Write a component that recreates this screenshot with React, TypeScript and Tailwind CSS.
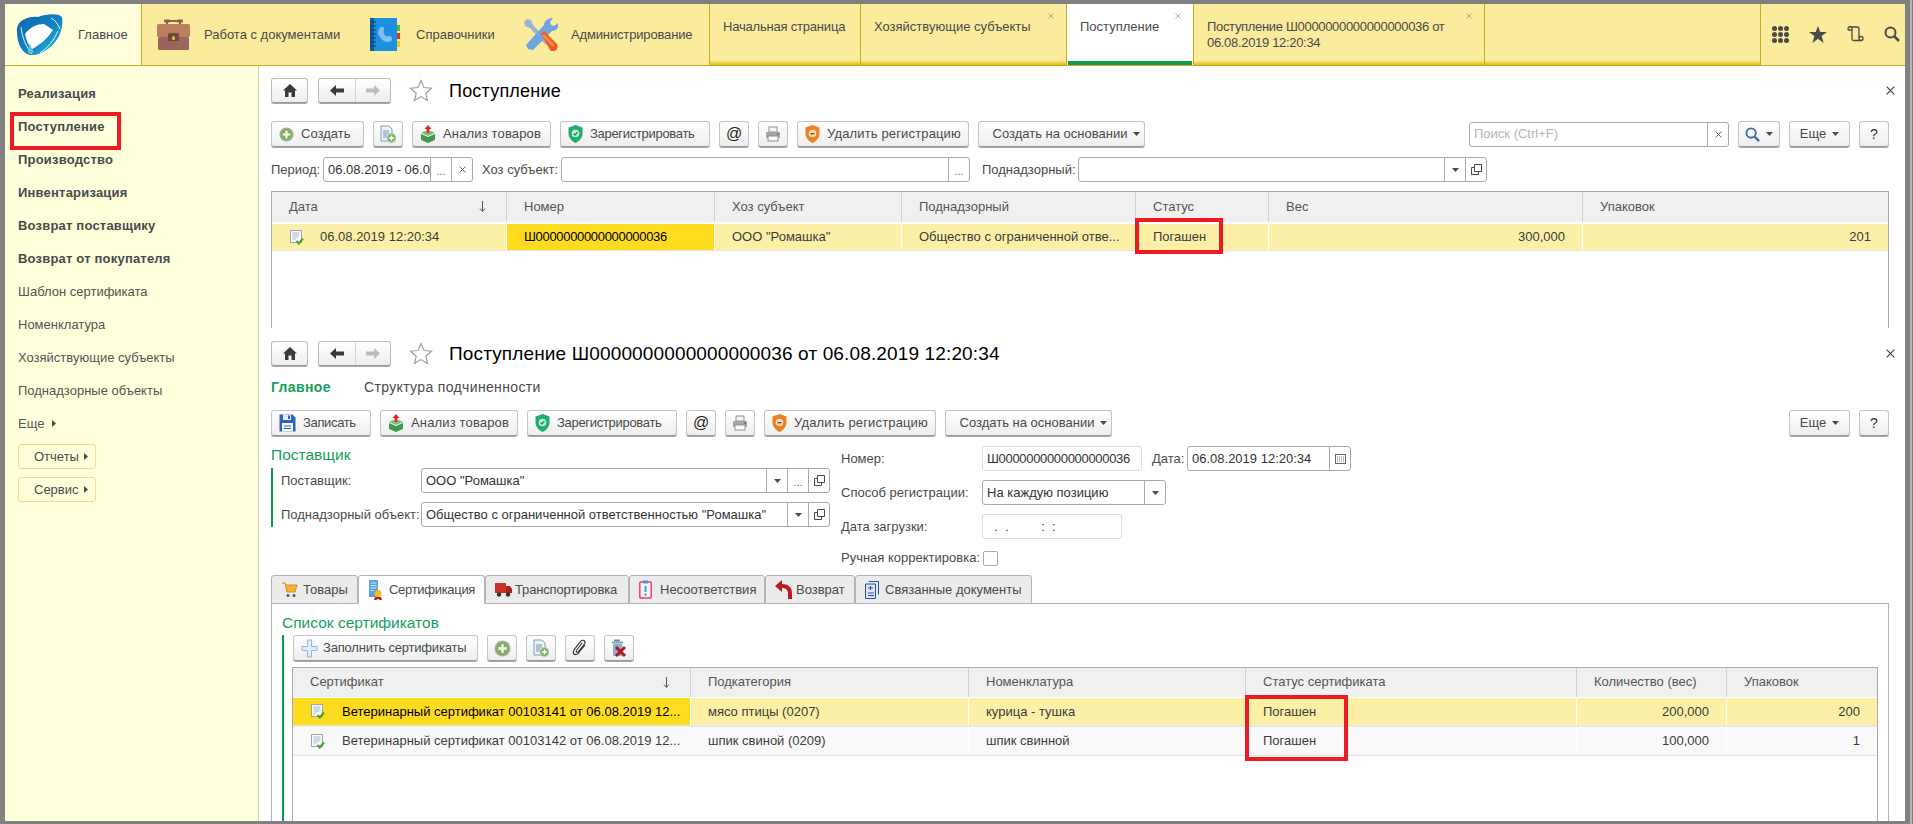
import type { ReactNode } from 'react';

const ink = 'text-[#4a4a4a]';

function Svg({ w = 16, h = 16, vb = '0 0 16 16', children }: { w?: number; h?: number; vb?: string; children: ReactNode }) {
  return (
    <svg width={w} height={h} viewBox={vb} className="shrink-0">
      {children}
    </svg>
  );
}

function Logo() {
  return (
    <svg width="47" height="42" viewBox="0 0 47 42" className="shrink-0">
      <defs>
        <linearGradient id="lg1" x1="0" y1="0" x2="1" y2="1">
          <stop offset="0" stopColor="#0d66ae" />
          <stop offset="0.55" stopColor="#0f84c6" />
          <stop offset="1" stopColor="#33c4d4" />
        </linearGradient>
      </defs>
      <path d="M1 14C3 6 12 2 22 3 30 0 42-1 46 3c1 5 0 13-3 19-5 10-17 20-29 19C6 40 0 28 1 14z" fill="url(#lg1)" />
      <path d="M9 20c5-7 12-10 19-10l9 6c-6 9-13 15-21 19-4-4-6-10-7-15z" fill="#fff" />
      <path d="M5 13c1 10 5 20 11 27M35 4c4 2 7 6 9 11M24 39c8-5 14-13 18-22" fill="none" stroke="#fff" strokeWidth="0.900" />
      <path d="M14 30c1 3 2 5 4 8l-5 2c-2-3-1-7 1-10z" fill="#5fc4dc" />
    </svg>
  );
}

function Briefcase() {
  return (
    <Svg w={35} h={31} vb="0 0 35 31">
      <path d="M11 5V2h13v3" fill="none" stroke="#8a6152" strokeWidth="2" />
      <rect x="8" y="0.5" width="6" height="3" rx="1" fill="#8a6152" />
      <rect x="21" y="0.5" width="6" height="3" rx="1" fill="#8a6152" />
      <rect x="1" y="5" width="33" height="13" rx="1.5" fill="#b87e5e" />
      <rect x="2" y="18" width="31" height="13" rx="1.5" fill="#99665c" />
      <path d="M12 22v-6a2 2 0 0 1 2-2h7a2 2 0 0 1 2 2v6z" fill="#6f4a44" />
      <rect x="16" y="17" width="3" height="4" rx="1.5" fill="#f2c21c" />
    </Svg>
  );
}

function PhoneBook() {
  return (
    <Svg w={30} h={33} vb="0 0 30 33">
      <rect x="27" y="7" width="3" height="6" fill="#49b83d" />
      <rect x="27" y="15" width="3" height="6" fill="#d33a2c" />
      <rect x="27" y="23" width="3" height="6" fill="#f2c21c" />
      <rect x="1" y="0" width="26" height="33" fill="#1c8fe2" />
      <rect x="0" y="0" width="4" height="33" fill="#0f5f9c" />
      <path d="M0 4h6M0 8h6M0 12h6M0 16h6M0 20h6M0 24h6M0 28h6" stroke="#0a3c66" strokeWidth="1.2" />
      <path d="M11 9c2-1 3 0 3 2 0 2-1 3 0 5s3 3 5 2c2 0 3 1 3 3s-2 3-4 3c-5 0-9-5-10-9 0-3 1-5 3-6z" fill="#7fc0f2" />
    </Svg>
  );
}

function Tools() {
  return (
    <Svg w={34} h={33} vb="0 0 34 33">
      <path d="M3 1l4 1 2 5 16 17-3 3L6 10 1 8 0 4z" fill="#9ab4cc" />
      <path d="M29 0l-3 4 1 3 3 1 4-3c1 4-1 8-6 8L9 32l-5-1-2-4L20 7c0-4 4-7 9-7z" fill="#6ea4e2" />
      <path d="M17 16l3-3 13 13c1 2 1 4-1 6s-4 2-6 0z" fill="#ee5a24" />
      <path d="M18 18l2-2 11 11-2 2z" fill="#f98b45" />
    </Svg>
  );
}

function PlusCircle({ s = 15 }: { s?: number }) {
  return (
    <Svg w={s} h={s}>
      <circle cx="8" cy="8" r="7.5" fill="#a9a9a0" />
      <circle cx="8" cy="8" r="6" fill="#7bb456" />
      <path d="M8 4v8M4 8h8" stroke="#fff" strokeWidth="2.2" />
    </Svg>
  );
}

function DocPlus() {
  return (
    <Svg w={16} h={18} vb="0 0 16 18">
      <path d="M1 1h8l3 3v12H1z" fill="#eef3f8" stroke="#7d9bb8" />
      <path d="M3 6h6M3 8h6M3 10h4M3 12h4" stroke="#6f93b5" />
      <circle cx="11.5" cy="13" r="4.5" fill="#7bb456" stroke="#c5c9c0" />
      <path d="M11.5 10.5v5M9 13h5" stroke="#fff" strokeWidth="1.4" />
    </Svg>
  );
}

function BoxArrow() {
  return (
    <Svg w={16} h={18} vb="0 0 16 18">
      <path d="M1 9l7 3 7-3v6l-7 3-7-3z" fill="#3f9a52" />
      <path d="M1 8l4-2 3 2 3-2 4 2-7 3z" fill="#76c27c" />
      <path d="M8 0l3.500 4H9.500v4h-3V4H4.500z" fill="#d92c20" />
    </Svg>
  );
}

function Shield({ orange = false }: { orange?: boolean }) {
  return (
    <Svg w={15} h={18} vb="0 0 15 18">
      <path d="M7.500 0l7 2.500v6c0 4-3 7.500-7 9.500-4-2-7-5.500-7-9.500v-6z" fill={orange ? '#ea8125' : '#22ad6c'} />
      <circle cx="7.500" cy="8.500" r="3.800" fill={orange ? '#f7d7b0' : '#c8f0dc'} />
      {orange ? <rect x="5.500" y="8" width="4" height="1.400" fill="#6b5a4c" /> : <path d="M5.500 8.500l1.500 1.500 2.500-3" fill="none" stroke="#1d8f59" strokeWidth="1.300" />}
    </Svg>
  );
}

function Printer() {
  return (
    <Svg w={16} h={16}>
      <rect x="4" y="1" width="8" height="5" fill="#f4f4f4" stroke="#8f8f8f" />
      <rect x="1" y="6" width="14" height="6" rx="1" fill="#a5a5a5" />
      <rect x="3" y="10" width="10" height="5" fill="#fff" stroke="#8f8f8f" />
      <rect x="12" y="7.500" width="2" height="1.500" fill="#d84a3a" />
    </Svg>
  );
}

function Disk() {
  return (
    <Svg w={17} h={18} vb="0 0 17 18">
      <path d="M0.500 0.500h13l3 3v14h-16z" fill="#2c63b4" />
      <rect x="4" y="0.500" width="8" height="5.500" fill="#e4edf8" />
      <rect x="9" y="1.500" width="2" height="3.500" fill="#2c63b4" />
      <rect x="3" y="9" width="11" height="8.500" fill="#f3f6fb" />
      <path d="M5 12h7M5 14.500h7" stroke="#2c63b4" />
    </Svg>
  );
}

function Clip() {
  return (
    <Svg w={16} h={18} vb="0 0 16 18">
      <path d="M13 6l-6.500 8c-1.500 1.800-3.500 2-4.500 1-1-1-.800-3 .500-4.800l6-7.500c1.200-1.500 2.800-1.800 3.800-1 1 .800 1 2.300-.200 3.800l-5.600 7c-.700.900-1.500 1-2 .600-.500-.400-.400-1.200.300-2.100L10 4" fill="none" stroke="#333" strokeWidth="1.100" />
    </Svg>
  );
}

function TrashX() {
  return (
    <Svg w={16} h={19} vb="0 0 16 19">
      <rect x="3" y="0.500" width="6" height="2" rx="1" fill="#5f86a8" />
      <rect x="1" y="2.500" width="11" height="2" fill="#7fa2c0" />
      <path d="M2 5h9v12H2z" fill="#90aec8" />
      <path d="M5 8l9 9M14 8l-9 9" stroke="#a81c22" strokeWidth="3" />
    </Svg>
  );
}

function BluePlus() {
  return (
    <Svg w={17} h={19} vb="0 0 17 19">
      <path d="M6.500 1h4v6.500H16v4h-5.500V18h-4v-6.500H1v-4h5.500z" fill="#e3effb" stroke="#8cb7e6" strokeLinejoin="round" />
    </Svg>
  );
}

function RowDoc() {
  return (
    <Svg w={16} h={15} vb="0 0 16 15">
      <rect x="1.500" y="0.500" width="11" height="12" fill="#f7f9fb" stroke="#97a6b2" />
      <path d="M3.500 3h7M3.500 5h7M3.500 7h6M3.500 9h3" stroke="#aab7c2" />
      <path d="M7.500 11l2.300 2.500 4.200-5" fill="none" stroke="#4ba32e" strokeWidth="2.200" />
    </Svg>
  );
}

function Cart() {
  return (
    <Svg w={17} h={17} vb="0 0 17 17">
      <path d="M1 2h3l2 9h8l2-7H5" fill="#f2b632" stroke="#d08c18" />
      <circle cx="7" cy="14.500" r="1.500" fill="#555" />
      <circle cx="13" cy="14.500" r="1.500" fill="#555" />
    </Svg>
  );
}

function Cert() {
  return (
    <Svg w={16} h={20} vb="0 0 16 20">
      <rect x="1" y="0" width="9" height="17" fill="#5aa0de" />
      <path d="M2.500 3h6M2.500 5.500h6M2.500 8h6M2.500 10.500h3" stroke="#cfe6f8" />
      <path d="M7 17l-1 3h2l2-1 2 1h2l-1-3z" fill="#b51c1c" />
      <circle cx="10" cy="13.500" r="3.500" fill="#f0c01e" />
    </Svg>
  );
}

function Truck() {
  return (
    <Svg w={17} h={16} vb="0 0 17 16">
      <rect x="0" y="1" width="11" height="10" fill="#c9302a" />
      <path d="M11 4h4l2 3v4h-6z" fill="#a8231f" />
      <circle cx="4" cy="12.500" r="2.200" fill="#333" />
      <circle cx="13" cy="12.500" r="2.200" fill="#333" />
    </Svg>
  );
}

function Clipboard() {
  return (
    <Svg w={13} h={19} vb="0 0 13 19">
      <rect x="0.800" y="2" width="11.400" height="16" rx="1" fill="#fdf3f5" stroke="#e0415e" strokeWidth="1.400" />
      <rect x="4" y="0.500" width="5" height="3" fill="#3aa0dc" />
      <path d="M6.500 6v6" stroke="#3aa0dc" strokeWidth="2" />
      <circle cx="6.500" cy="14.500" r="1.200" fill="#3aa0dc" />
    </Svg>
  );
}

function BackArrow() {
  return (
    <Svg w={17} h={19} vb="0 0 17 19">
      <path d="M7 0L0 6l7 6V8c4 0 6 2 6 6v5h4v-6c0-6-4-9-10-9z" fill="#b81c1c" />
    </Svg>
  );
}

function BlueDoc() {
  return (
    <Svg w={14} h={18} vb="0 0 14 18">
      <path d="M3.500 0.500h10v13" fill="none" stroke="#2c4f9e" />
      <path d="M0.500 3h10v14.500h-10z" fill="#dbe6f7" stroke="#2c4f9e" />
      <path d="M3 7h5M5.500 5v4M3 12h6M3 14.500h6" stroke="#2c4f9e" />
    </Svg>
  );
}

function Caret({ right = false }: { right?: boolean }) {
  return right ? (
    <svg width="4" height="7" viewBox="0 0 4 7" className="shrink-0">
      <path d="M0 0l4 3.500L0 7z" fill="#4a4a4a" />
    </svg>
  ) : (
    <svg width="7" height="4" viewBox="0 0 7 4" className="shrink-0">
      <path d="M0 0h7L3.500 4z" fill="#4a4a4a" />
    </svg>
  );
}

function OpenIcon() {
  return (
    <svg width="11" height="11" viewBox="0 0 11 11" className="shrink-0">
      <path d="M3.500 0.500h7v7h-7z" fill="#fff" stroke="#4a4a4a" />
      <path d="M3.500 3.500h-3v7h7v-3" fill="none" stroke="#4a4a4a" />
    </svg>
  );
}

function Cross({ s = 7, color = '#777' }: { s?: number; color?: string }) {
  return (
    <svg width={s} height={s} viewBox="0 0 7 7" className="shrink-0">
      <path d="M0.500 0.500l6 6M6.500 0.500l-6 6" stroke={color} strokeWidth="0.900" />
    </svg>
  );
}

function Btn({ w, children }: { w: string; children?: ReactNode }) {
  return (
    <div className={`${w} h-[26px] shrink-0 flex items-center justify-center rounded-[3px] border border-[#c4c4c4] border-b-[#999] bg-gradient-to-b from-white to-[#eeeeee] shadow-[0_1px_0_#a8a8a8]`}>
      {children}
    </div>
  );
}

function IconTextBtn({ w, icon, text, track = '', gap = 'gap-[7px]' }: { w: string; icon: ReactNode; text: string; track?: string; gap?: string }) {
  return (
    <div className={`${w} h-[26px] shrink-0 flex items-center ${gap} pl-[7px] rounded-[3px] border border-[#c4c4c4] border-b-[#999] bg-gradient-to-b from-white to-[#eeeeee] shadow-[0_1px_0_#a8a8a8] ${ink}`}>
      {icon}
      <span className={`whitespace-nowrap ${track}`}>{text}</span>
    </div>
  );
}

function Field({ w, text, buttons = [], soft = false, placeholder = false, track = '' }: { w: string; text?: string; buttons?: ReactNode[]; soft?: boolean; placeholder?: boolean; track?: string }) {
  return (
    <div className={`${w} h-[25px] shrink-0 flex rounded-[3px] border bg-white ${soft ? 'border-[#dcdcdc]' : 'border-[#a9a9a9]'}`}>
      <div className={`flex-1 min-w-0 flex items-center pl-[4px] whitespace-nowrap overflow-hidden ${track} ${placeholder ? 'text-[#b5b5b5]' : 'text-[#333]'}`}>{text}</div>
      {buttons.map((b, i) => (
        <div key={i} className="w-[21px] border-l border-[#a9a9a9] flex items-center justify-center text-[#666]">
          {b}
        </div>
      ))}
    </div>
  );
}

function NavRow({ title, large = false }: { title: string; large?: boolean }) {
  return (
    <div className="flex items-center h-[25px]">
      <div className="w-[37px] h-[25px] flex items-center justify-center rounded-[3px] border border-[#bdbdbd] border-b-[#999] bg-gradient-to-b from-white to-[#eeeeee] shadow-[0_1px_0_#a8a8a8]">
        <svg width="14" height="13" viewBox="0 0 14 13">
          <path d="M7 0L0 6.500h2V13h3.500V8.500h3V13H12V6.500h2z" fill="#3a3a3a" />
        </svg>
      </div>
      <div className="ml-[10px] w-[73px] h-[25px] flex rounded-[3px] border border-[#bdbdbd] border-b-[#999] bg-gradient-to-b from-white to-[#eeeeee] shadow-[0_1px_0_#a8a8a8]">
        <div className="w-[37px] border-r border-[#d5d5d5] flex items-center justify-center">
          <svg width="14" height="11" viewBox="0 0 14 11">
            <path d="M6 0v3.500h8v4H6V11L0 5.500z" fill="#3a3a3a" />
          </svg>
        </div>
        <div className="flex-1 flex items-center justify-center">
          <svg width="14" height="11" viewBox="0 0 14 11">
            <path d="M8 0v3.500H0v4h8V11l6-5.500z" fill="#bcbcbc" />
          </svg>
        </div>
      </div>
      <svg width="24" height="23" viewBox="0 0 24 23" className="ml-[18px]">
        <path d="M12 1.500l3 7 7.500.7-5.700 5 1.700 7.300L12 17.600l-6.500 3.900 1.700-7.300-5.700-5 7.500-.7z" fill="#fff" stroke="#a0a0a0" strokeWidth="1.200" />
      </svg>
      <span className={`ml-[16px] mt-[2px] text-black ${large ? 'text-[19px] tracking-[0.14px]' : 'text-[18px] tracking-[0.2px]'}`}>{title}</span>
      <div className="ml-auto mr-[-6px]">
        <Cross s={9} color="#444" />
      </div>
    </div>
  );
}

function SectionTab({ icon, text, w, track = '' }: { icon: ReactNode; text: string; w: string; track?: string }) {
  return (
    <div className={`${w} flex items-center`}>
      {icon}
      <span className={`ml-[13px] whitespace-nowrap ${ink} ${track}`}>{text}</span>
    </div>
  );
}

function OpenTab({ w, children, closable = true, active = false, track = '' }: { w: string; children: ReactNode; closable?: boolean; active?: boolean; track?: string }) {
  return (
    <div className={`${w} relative h-full border-r border-[#c8ae1c] flex flex-col ${active ? 'bg-white' : ''}`}>
      <div className={`flex-1 pl-[13px] pt-[15px] leading-[16px] ${ink} ${track}`}>{children}</div>
      {closable && (
        <div className="absolute top-[9px] right-[12px]">
          <Cross s={6} color="#999" />
        </div>
      )}
      <div className={`h-[4px] ${active ? 'mx-[1px] bg-[#0d9a4a]' : 'bg-gradient-to-b from-[#f8e268] to-[#e2bc0a]'}`} />
    </div>
  );
}

function SideItem({ text, bold = false }: { text: string; bold?: boolean }) {
  return <div className={`h-[33px] flex items-center whitespace-nowrap ${bold ? 'font-bold tracking-[0.2px] text-[#4a4a4a]' : 'text-[#555]'}`}>{text}</div>;
}

function SideBtn({ text }: { text: string }) {
  return (
    <div className={`w-[78px] h-[25px] rounded-[3px] border border-[#f0dc8e] flex items-center pl-[15px] gap-[5px] ${ink}`}>
      <span>{text}</span>
      <Caret right />
    </div>
  );
}

function HeadCell({ text, arrow = false, last = false }: { text: string; arrow?: boolean; last?: boolean }) {
  return (
    <div className={`h-full flex items-center justify-between pl-[17px] pr-[20px] pb-[1px] bg-[#f0f0f0] text-[#555] whitespace-nowrap ${last ? '' : 'border-r border-[#d2d2d2]'}`}>
      <span>{text}</span>
      {arrow && (
        <svg width="7" height="11" viewBox="0 0 7 11">
          <path d="M3.500 0v10M1 7.500l2.500 3 2.500-3" fill="none" stroke="#555" />
        </svg>
      )}
    </div>
  );
}

function Cell({ bg, children, right = false, last = false, strong = false }: { bg: string; children: ReactNode; right?: boolean; last?: boolean; strong?: boolean }) {
  return (
    <div className={`${bg} h-full flex items-center ${right ? 'justify-end' : ''} pl-[17px] pr-[17px] whitespace-nowrap overflow-hidden ${strong ? 'text-black' : 'text-[#3c3c3c]'} ${last ? '' : 'border-r border-white'}`}>
      {children}
    </div>
  );
}

function Label({ w, children }: { w: string; children: ReactNode }) {
  return <div className={`${w} shrink-0 whitespace-nowrap ${ink}`}>{children}</div>;
}

const caret = <Caret />;
const dots = <span className="text-[11px] leading-[11px] pt-[4px]">...</span>;
const open = <OpenIcon />;
const clear = <Cross s={7} color="#555" />;
const calendar = (
  <svg width="11" height="10" viewBox="0 0 11 10">
    <rect x="0.500" y="0.500" width="10" height="9" fill="#fff" stroke="#666" />
    <path d="M2 3h7M2 5h7M2 7h7" stroke="#777" strokeDasharray="1 1" />
  </svg>
);

const redBox = 'absolute border-[4px] border-[#ed1c24] pointer-events-none';
const numberTrack = 'tracking-[-0.32px]';

export default function App() {
  return (
    <div className="relative w-[1913px] h-[824px] overflow-hidden flex bg-[#808080] text-[13px] [font-family:'Liberation_Sans',Arial,sans-serif]">
      <div className="ml-[5px] mt-[4px] mb-[3px] flex-1 min-w-0 flex flex-col">
        {/* top bar */}
        <div className="h-[62px] shrink-0 flex bg-[#fbeb9c] border-b border-[#c8ae1c]">
          <div className="w-[137px] shrink-0 flex items-center pl-[11px] bg-[#ffffdc] border-r border-[#c8ae1c]">
            <Logo />
            <span className={`ml-[15px] ${ink}`}>Главное</span>
          </div>
          <div className="w-[568px] shrink-0 flex items-center pl-[14px] border-r border-[#c8ae1c]">
            <SectionTab w="w-[214px]" icon={<Briefcase />} text="Работа с документами" />
            <SectionTab w="w-[154px]" icon={<PhoneBook />} text="Справочники" track="ml-[16px]" />
            <SectionTab w="w-[180px]" icon={<Tools />} text="Администрирование" track="tracking-[-0.15px]" />
          </div>
          <OpenTab w="w-[151px]" closable={false} track="tracking-[-0.2px]">
            Начальная страница
          </OpenTab>
          <OpenTab w="w-[206px]">Хозяйствующие субъекты</OpenTab>
          <OpenTab w="w-[127px]" active>
            Поступление
          </OpenTab>
          <OpenTab w="w-[291px]" track={numberTrack}>
            Поступление Ш0000000000000000036 от
            <br />
            06.08.2019 12:20:34
          </OpenTab>
          <OpenTab w="w-[276px]" closable={false}>
            {''}
          </OpenTab>
          <div className="flex-1 flex items-center gap-[20px] pl-[11px] pb-[1px]">
            <svg width="17" height="17" viewBox="0 0 17 17">
              {[2.5, 8.5, 14.5].map((x) => [2.5, 8.5, 14.5].map((y) => <circle key={`${x}-${y}`} cx={x} cy={y} r="2.500" fill="#4a4a4a" />))}
            </svg>
            <svg width="18" height="17" viewBox="0 0 18 17">
              <path d="M9 0l2.300 6H18l-5.400 4 2 7L9 12.800 3.400 17l2-7L0 6h6.700z" fill="#4a4a4a" />
            </svg>
            <svg width="17" height="16" viewBox="0 0 17 16">
              <path d="M1 4h4M1 4V2.500A1.500 1.500 0 0 1 2.500 1h8A1.500 1.500 0 0 1 12 2.500V12M2.500 1A1.500 1.500 0 0 1 5 2.500v10.500A1.500 1.500 0 0 0 6.500 14.500H14" fill="none" stroke="#4a4a4a" strokeWidth="1.300" />
              <circle cx="14" cy="12.500" r="2" fill="none" stroke="#4a4a4a" strokeWidth="1.300" />
            </svg>
            <svg width="16" height="16" viewBox="0 0 16 16">
              <circle cx="6.500" cy="6.500" r="5" fill="none" stroke="#4a4a4a" strokeWidth="2" />
              <path d="M10.500 10.500L15 15" stroke="#4a4a4a" strokeWidth="2.500" />
            </svg>
          </div>
        </div>

        <div className="flex-1 min-h-0 flex">
          {/* sidebar */}
          <div className="w-[254px] shrink-0 bg-[#ffffdc] border-r border-[#d4d2a8] pl-[13px] pt-[11px]">
            <SideItem bold text="Реализация" />
            <SideItem bold text="Поступление" />
            <SideItem bold text="Производство" />
            <SideItem bold text="Инвентаризация" />
            <SideItem bold text="Возврат поставщику" />
            <SideItem bold text="Возврат от покупателя" />
            <SideItem text="Шаблон сертификата" />
            <SideItem text="Номенклатура" />
            <SideItem text="Хозяйствующие субъекты" />
            <SideItem text="Поднадзорные объекты" />
            <div className="h-[33px] flex items-center gap-[8px] text-[#555]">
              Еще
              <Caret right />
            </div>
            <div className="mt-[4px] flex flex-col gap-[8px]">
              <SideBtn text="Отчеты" />
              <SideBtn text="Сервис" />
            </div>
          </div>

          {/* content */}
          <div className="flex-1 min-w-0 bg-white pl-[12px] pr-[16px] pt-[12px] flex flex-col">
            <NavRow title="Поступление" />
            <div className="mt-[18px] flex items-center gap-[9px]">
              <IconTextBtn w="w-[93px]" icon={<PlusCircle />} text="Создать" />
              <Btn w="w-[30px]">
                <DocPlus />
              </Btn>
              <IconTextBtn w="w-[139px]" icon={<BoxArrow />} text="Анализ товаров" track="tracking-[0.15px]" />
              <IconTextBtn w="w-[150px]" icon={<Shield />} text="Зарегистрировать" track="tracking-[-0.3px]" />
              <Btn w="w-[30px]">
                <span className="text-[16px] text-[#222]">@</span>
              </Btn>
              <Btn w="w-[30px]">
                <Printer />
              </Btn>
              <IconTextBtn w="w-[172px]" icon={<Shield orange />} text="Удалить регистрацию" track="tracking-[0.15px]" />
              <Btn w="w-[167px]">
                <span className={`ml-[10px] mr-[6px] ${ink}`}>Создать на основании</span>
                <Caret />
              </Btn>
              <div className="ml-auto flex items-center">
                <div className="mr-[9px]">
                  <Field w="w-[260px]" text="Поиск (Ctrl+F)" placeholder buttons={[clear]} />
                </div>
                <Btn w="w-[42px]">
                  <svg width="15" height="15" viewBox="0 0 16 16" className="mr-[6px]">
                    <circle cx="6.500" cy="6.500" r="5" fill="none" stroke="#3f6f9f" strokeWidth="2" />
                    <path d="M10.500 10.500L15 15" stroke="#3f6f9f" strokeWidth="2.500" />
                  </svg>
                  <Caret />
                </Btn>
                <div className="ml-[9px]">
                  <Btn w="w-[61px]">
                    <span className={`mr-[6px] ${ink}`}>Еще</span>
                    <Caret />
                  </Btn>
                </div>
                <div className="ml-[9px]">
                  <Btn w="w-[30px]">
                    <span className="text-[14px] text-[#333]">?</span>
                  </Btn>
                </div>
              </div>
            </div>
            <div className="mt-[10px] flex items-center">
              <Label w="w-[52px]">Период:</Label>
              <Field w="w-[150px]" text="06.08.2019 - 06.0" buttons={[dots, clear]} />
              <Label w="w-[79px] ml-[9px]">Хоз субъект:</Label>
              <Field w="w-[409px]" buttons={[dots]} />
              <Label w="w-[96px] ml-[12px]">Поднадзорный:</Label>
              <Field w="w-[409px]" buttons={[caret, open]} />
            </div>

            {/* list table */}
            <div className="mt-[9px] h-[137px] shrink-0 border-t border-x border-[#a9a9a9]">
              <div className="grid grid-cols-[235px_208px_187px_234px_133px_314px_1fr] grid-rows-[30px_2px_26px_1px]">
                <HeadCell text="Дата" arrow />
                <HeadCell text="Номер" />
                <HeadCell text="Хоз субъект" />
                <HeadCell text="Поднадзорный" />
                <HeadCell text="Статус" />
                <HeadCell text="Вес" />
                <HeadCell text="Упаковок" last />
                <div className="col-span-7" />
                <Cell bg="bg-[#fcf0a6]">
                  <RowDoc />
                  <span className="ml-[15px]">06.08.2019 12:20:34</span>
                </Cell>
                <Cell bg="bg-[#fddb1f]" strong>
                  <span className={numberTrack}>Ш0000000000000000036</span>
                </Cell>
                <Cell bg="bg-[#fcf0a6]">ООО "Ромашка"</Cell>
                <Cell bg="bg-[#fcf0a6]">Общество с ограниченной отве...</Cell>
                <Cell bg="bg-[#fcf0a6]">Погашен</Cell>
                <Cell bg="bg-[#fcf0a6]" right>
                  300,000
                </Cell>
                <Cell bg="bg-[#fcf0a6]" right last>
                  201
                </Cell>
                <div className="col-span-7 bg-[#e4e4e4]" />
              </div>
            </div>

            <div className="mt-[13px]">
              <NavRow title="Поступление Ш0000000000000000036 от 06.08.2019 12:20:34" large />
            </div>
            <div className="mt-[9px] h-[24px] flex items-center text-[14px] tracking-[0.35px]">
              <span className="w-[93px] font-bold text-[#17a05a]">Главное</span>
              <span className={ink}>Структура подчиненности</span>
            </div>
            <div className="mt-[11px] flex items-center gap-[9px]">
              <IconTextBtn w="w-[100px]" icon={<Disk />} text="Записать" track="tracking-[-0.35px]" />
              <IconTextBtn w="w-[138px]" icon={<BoxArrow />} text="Анализ товаров" track="tracking-[0.15px]" />
              <IconTextBtn w="w-[150px]" icon={<Shield />} text="Зарегистрировать" track="tracking-[-0.3px]" />
              <Btn w="w-[30px]">
                <span className="text-[16px] text-[#222]">@</span>
              </Btn>
              <Btn w="w-[30px]">
                <Printer />
              </Btn>
              <IconTextBtn w="w-[172px]" icon={<Shield orange />} text="Удалить регистрацию" track="tracking-[0.15px]" />
              <Btn w="w-[167px]">
                <span className={`ml-[10px] mr-[6px] ${ink}`}>Создать на основании</span>
                <Caret />
              </Btn>
              <div className="ml-auto flex items-center gap-[9px]">
                <Btn w="w-[61px]">
                  <span className={`mr-[6px] ${ink}`}>Еще</span>
                  <Caret />
                </Btn>
                <Btn w="w-[30px]">
                  <span className="text-[14px] text-[#333]">?</span>
                </Btn>
              </div>
            </div>

            {/* document fields */}
            <div className="mt-[10px] flex">
              <div className="w-[570px] shrink-0">
                <div className="h-[22px] text-[15.5px] leading-[18px] text-[#17a05a]">Поставщик</div>
                <div className="border-l-2 border-[#0d9a4a] pl-[8px] flex flex-col gap-[9px]">
                  <div className="flex items-center">
                    <Label w="w-[140px]">Поставщик:</Label>
                    <Field w="w-[409px]" text={'ООО "Ромашка"'} buttons={[caret, dots, open]} />
                  </div>
                  <div className="flex items-center">
                    <Label w="w-[140px]">Поднадзорный объект:</Label>
                    <Field w="w-[409px]" text={'Общество с ограниченной ответственностью "Ромашка"'} buttons={[caret, open]} />
                  </div>
                </div>
              </div>
              <div className="flex flex-col gap-[9px]">
                <div className="flex items-center">
                  <Label w="w-[141px]">Номер:</Label>
                  <Field w="w-[160px]" soft text="Ш0000000000000000036" track={numberTrack} />
                  <Label w="w-[35px] ml-[10px]">Дата:</Label>
                  <Field w="w-[164px]" text="06.08.2019 12:20:34" buttons={[calendar]} />
                </div>
                <div className="flex items-center">
                  <Label w="w-[141px]">Способ регистрации:</Label>
                  <Field w="w-[184px]" text="На каждую позицию" buttons={[caret]} />
                </div>
                <div className="flex items-center">
                  <Label w="w-[141px]">Дата загрузки:</Label>
                  <Field w="w-[140px]" soft text={'\u00a0\u00a0.\u00a0\u00a0.\u00a0\u00a0\u00a0\u00a0\u00a0\u00a0\u00a0\u00a0\u00a0:\u00a0\u00a0:'} />
                </div>
                <div className="flex items-center h-[16px] mt-[2px]">
                  <Label w="w-[142px]">Ручная корректировка:</Label>
                  <div className="w-[15px] h-[15px] rounded-[2px] border border-[#a9a9a9] bg-white" />
                </div>
              </div>
            </div>

            {/* page tabs */}
            <div className="mt-[9px] flex h-[29px] relative z-10 shrink-0">
              {[
                { w: 'w-[87px]', gap: 'gap-[5px]', icon: <Cart />, text: 'Товары', track: '' },
                { w: 'w-[127px]', gap: 'gap-[5px]', icon: <Cert />, text: 'Сертификация', track: 'tracking-[-0.3px]', active: true },
                { w: 'w-[144px]', gap: 'gap-[3px]', icon: <Truck />, text: 'Транспортировка', track: 'tracking-[-0.15px]' },
                { w: 'w-[136px]', gap: 'gap-[8px]', icon: <Clipboard />, text: 'Несоответствия', track: '' },
                { w: 'w-[90px]', gap: 'gap-[4px]', icon: <BackArrow />, text: 'Возврат', track: '' },
                { w: 'w-[177px]', gap: 'gap-[6px]', icon: <BlueDoc />, text: 'Связанные документы', track: '' },
              ].map((t) => (
                <div key={t.text} className={`${t.w} ${t.gap} ${t.track} flex items-center pl-[9px] rounded-t-[3px] border border-[#b4b4b4] ${t.active ? 'bg-white border-b-white' : 'bg-[#ebebeb]'} ${ink} whitespace-nowrap`}>
                  {t.icon}
                  {t.text}
                </div>
              ))}
            </div>
            <div className="mt-[-1px] flex-1 min-h-0 flex flex-col border border-[#b4b4b4] border-b-0 pl-[10px] pr-[10px] pt-[9px]">
              <div className="h-[22px] text-[15.5px] leading-[20px] text-[#17a05a]">Список сертификатов</div>
              <div className="flex-1 min-h-0 flex flex-col border-l-2 border-[#0d9a4a] pl-[8px]">
                <div className="flex items-center gap-[9px] pl-[1px]">
                  <IconTextBtn w="w-[185px]" gap="gap-[5px]" icon={<BluePlus />} text="Заполнить сертификаты" track="tracking-[-0.2px]" />
                  <Btn w="w-[30px]">
                    <PlusCircle s={17} />
                  </Btn>
                  <Btn w="w-[30px]">
                    <DocPlus />
                  </Btn>
                  <Btn w="w-[30px]">
                    <Clip />
                  </Btn>
                  <Btn w="w-[30px]">
                    <TrashX />
                  </Btn>
                </div>
                <div className="mt-[6px] flex-1 min-h-0 border-t border-x border-[#a9a9a9]">
                  <div className="grid grid-cols-[398px_278px_277px_331px_150px_1fr] grid-rows-[29px_1px_27px_2px_28px_1px]">
                    <HeadCell text="Сертификат" arrow />
                    <HeadCell text="Подкатегория" />
                    <HeadCell text="Номенклатура" />
                    <HeadCell text="Статус сертификата" />
                    <HeadCell text="Количество (вес)" />
                    <HeadCell text="Упаковок" last />
                    <div className="col-span-6" />
                    <Cell bg="bg-[#fddb1f]" strong>
                      <RowDoc />
                      <span className="ml-[16px]">Ветеринарный сертификат 00103141 от 06.08.2019 12...</span>
                    </Cell>
                    <Cell bg="bg-[#fcf0a6]">мясо птицы (0207)</Cell>
                    <Cell bg="bg-[#fcf0a6]">курица - тушка</Cell>
                    <Cell bg="bg-[#fcf0a6]">Погашен</Cell>
                    <Cell bg="bg-[#fcf0a6]" right>
                      200,000
                    </Cell>
                    <Cell bg="bg-[#fcf0a6]" right last>
                      200
                    </Cell>
                    <div className="col-span-6 bg-[#e8e8e8]" />
                    <Cell bg="bg-[#f9f9f9]">
                      <RowDoc />
                      <span className="ml-[16px]">Ветеринарный сертификат 00103142 от 06.08.2019 12...</span>
                    </Cell>
                    <Cell bg="bg-[#f9f9f9]">шпик свиной (0209)</Cell>
                    <Cell bg="bg-[#f9f9f9]">шпик свинной</Cell>
                    <Cell bg="bg-[#f9f9f9]">Погашен</Cell>
                    <Cell bg="bg-[#f9f9f9]" right>
                      100,000
                    </Cell>
                    <Cell bg="bg-[#f9f9f9]" right last>
                      1
                    </Cell>
                    <div className="col-span-6 bg-[#e4e4e4]" />
                  </div>
                </div>
              </div>
            </div>
          </div>
        </div>
      </div>

      {/* window edge */}
      <div className="w-[8px] pl-[5px] pr-[1px]">
        <div className="h-full bg-[#b4b4b4]" />
      </div>

      {/* red annotation frames */}
      <div className={`${redBox} left-[10px] top-[112px] w-[111px] h-[38px]`} />
      <div className={`${redBox} left-[1135px] top-[218px] w-[88px] h-[36px]`} />
      <div className={`${redBox} left-[1245px] top-[695px] w-[103px] h-[66px]`} />
    </div>
  );
}
